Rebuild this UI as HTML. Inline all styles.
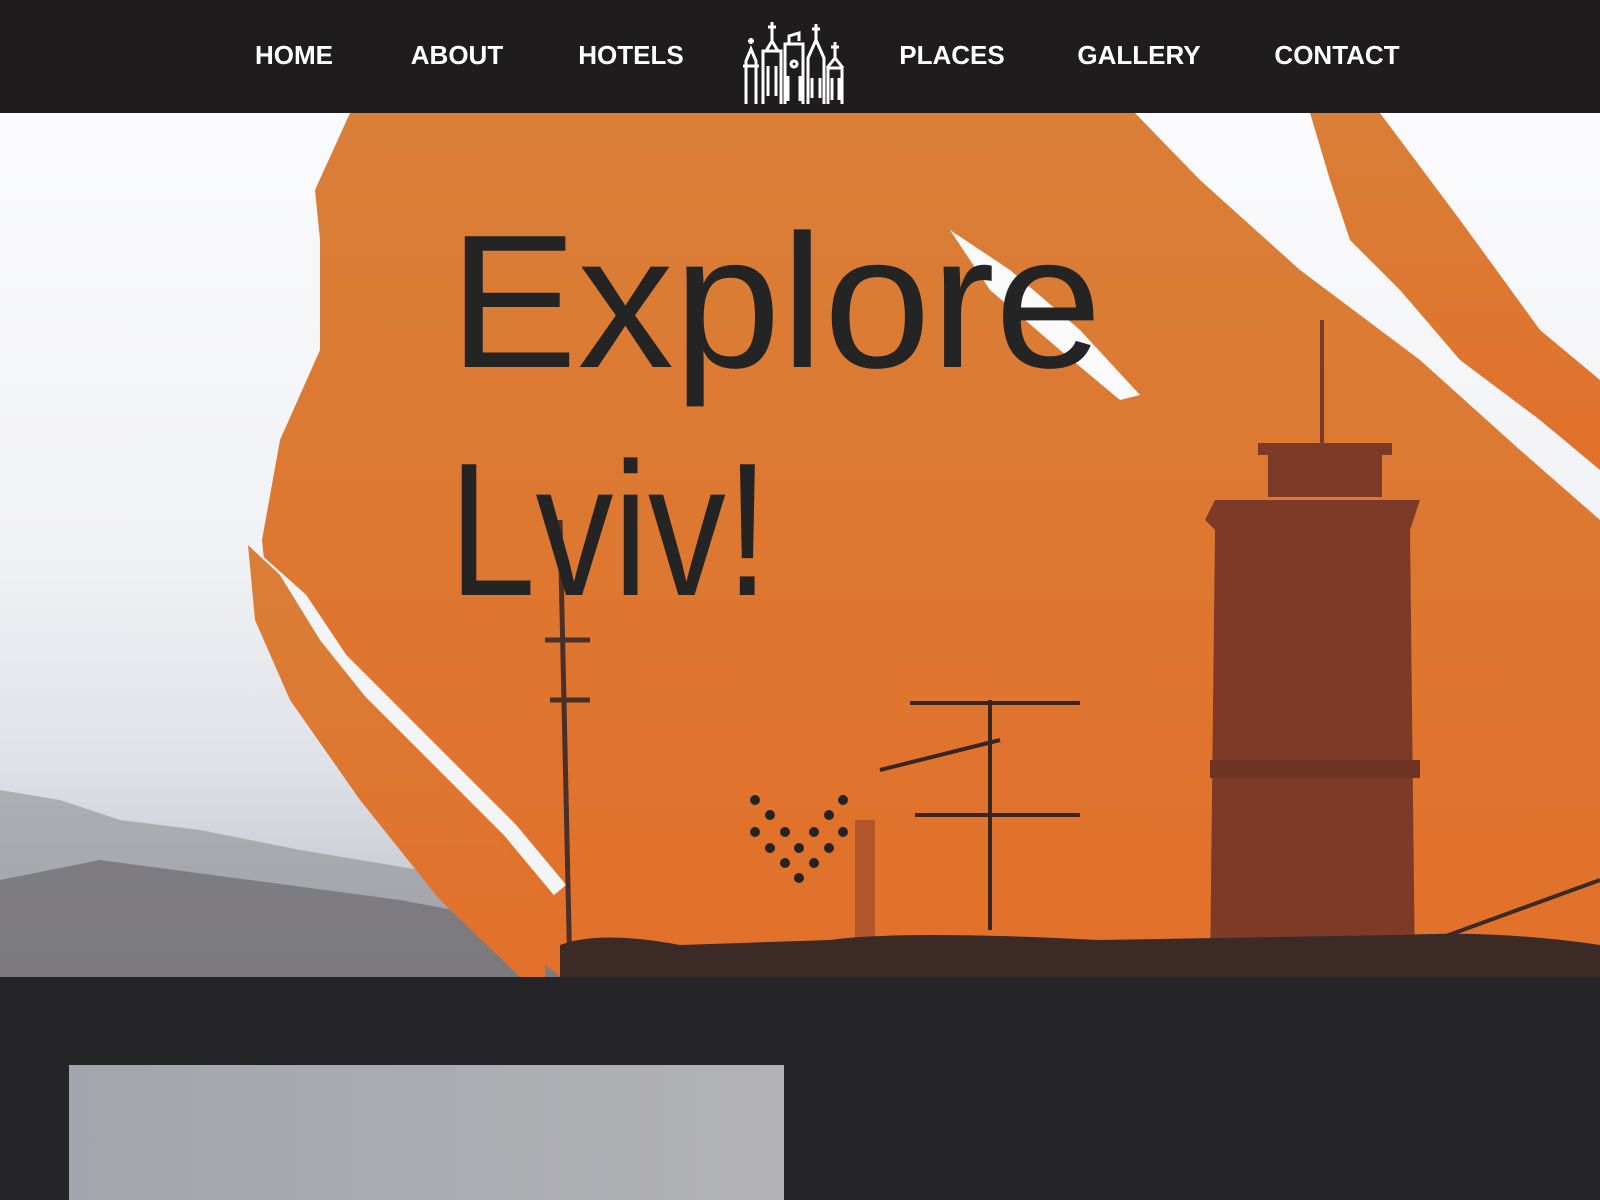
<!DOCTYPE html>
<html><head><meta charset="utf-8"><style>
html,body{margin:0;padding:0;width:1600px;height:1200px;overflow:hidden;background:#252429;font-family:"Liberation Sans",sans-serif}
.nav{position:absolute;left:0;top:0;width:1600px;height:113px;background:#1e1c1c;z-index:3}
.nav a{position:absolute;top:40px;color:#fff;font-weight:bold;font-size:26px;text-decoration:none;transform:translateX(-50%);letter-spacing:0}
.hero{position:absolute;left:0;top:113px;width:1600px;height:864px;overflow:hidden;background:linear-gradient(180deg,#fbfbfd 0%,#f1f2f5 50%,#dfe2e8 75%,#b9bcc3 100%)}
.box{position:absolute;left:69px;top:1065px;width:715px;height:135px;background:linear-gradient(90deg,#a2a5ac,#b3b3b6)}
</style></head><body>
<div class="nav">
<a style="left:294px">HOME</a>
<a style="left:457px">ABOUT</a>
<a style="left:631px">HOTELS</a>
<a style="left:952px">PLACES</a>
<a style="left:1139px">GALLERY</a>
<a style="left:1337px">CONTACT</a>
<svg style="position:absolute;left:738px;top:16px" width="110" height="90" viewBox="0 0 110 90" fill="none" stroke="#fff" stroke-width="3">
<path d="M8 88V45l5-12 5 12v43M5 50h16"/><path d="M13 28v-6M10 25h6"/>
<path d="M25 88V35h18v53M28 35l6-10 6 10M34 25V6M30 11h8M30 50v30M38 50v30"/>
<path d="M47 88V28h18v60M51 28v-8l10-3v8M56 45a3 3 0 1 0 .1 0M50 60v25M62 60v25"/>
<path d="M70 88V42l8-18 8 18v46M78 24V8M74 13h8M74 62v20M82 62v20"/>
<path d="M90 88V52h14v36M89 52l8-10 8 10M97 42V26M93 31h8M94 62v22M101 62v22"/>
</svg>
</div>
<div class="hero">
<svg width="1600" height="864" viewBox="0 113 1600 864" style="position:absolute;left:0;top:0">
<defs><linearGradient id="og" x1="0" y1="0" x2="0" y2="1"><stop offset="0" stop-color="#d97f38"/><stop offset="1" stop-color="#e2702a"/></linearGradient></defs>
<path d="M0 790 L60 800 L120 820 L200 830 L300 850 L420 870 L560 900 L560 977 L0 977Z" fill="#8e8f95" opacity=".6"/>
<path d="M0 880 L100 860 L250 880 L400 900 L560 930 L560 977 L0 977Z" fill="#6c6a6d" opacity=".7"/>
<path d="M350 113 L1135 113 L1200 180 L1300 270 L1420 360 L1520 450 L1600 520 L1600 977 L560 977 L470 900 L420 830 L350 760 L300 700 L270 620 L262 540 L280 440 L320 350 L320 240 L315 190 Z" fill="url(#og)"/>
<path d="M255 560 L300 600 L340 660 L400 720 L470 790 L510 830 L560 890" stroke="#f3f4f6" stroke-width="16" fill="none"/>
<path d="M248 545 L280 575 L320 640 L380 715 L450 790 L500 840 L545 900 L545 977 L520 977 L440 900 L360 800 L290 700 L255 620 Z" fill="url(#og)"/>
<path d="M1310 113 L1380 113 L1460 220 L1540 330 L1600 380 L1600 470 L1540 420 L1460 360 L1400 290 L1350 240 L1330 180 Z" fill="url(#og)"/>
<path d="M950 230 L1010 270 L1080 330 L1140 395 L1120 400 L1060 350 L990 290 Z" fill="#fafafb"/>
<path d="M1215 500 L1420 500 L1410 530 L1415 977 L1210 977 L1215 530 L1205 520Z" fill="#7d3a26"/>
<path d="M1270 450h110v45h-110zM1260 445h130v8h-130zM1322 320v125" fill="#7d3a26" stroke="#7d3a26" stroke-width="4"/>
<path d="M1210 760h210v18h-210z" fill="#6e3323"/>
<path d="M990 700v230M910 703h170M915 815h165M880 770l120-30" stroke="#3a2520" stroke-width="4"/>
<path d="M855 820h20v120h-20z" fill="#b0562a"/>
<path d="M560 520 L570 977 M545 640h45M550 700h40" stroke="#4a3028" stroke-width="5"/>
<path d="M560 945 Q600 930 680 945 L830 940 Q900 930 1100 940 L1400 935 Q1500 930 1600 945 L1600 977 L560 977Z" fill="#3c2a26"/>
<path d="M1380 960 L1600 880" stroke="#3c2a26" stroke-width="4"/>
<text x="449" y="367" font-family="Liberation Sans,sans-serif" font-size="190" fill="#242424" textLength="653" lengthAdjust="spacingAndGlyphs">Explore</text>
<text x="449" y="595" font-family="Liberation Sans,sans-serif" font-size="190" fill="#242424" textLength="320" lengthAdjust="spacingAndGlyphs">Lviv!</text>
<g fill="#242424">
<circle cx="755" cy="800" r="5"/><circle cx="843" cy="800" r="5"/>
<circle cx="770" cy="815" r="5"/><circle cx="829" cy="815" r="5"/>
<circle cx="755" cy="832" r="5"/><circle cx="785" cy="832" r="5"/><circle cx="814" cy="832" r="5"/><circle cx="843" cy="832" r="5"/>
<circle cx="770" cy="848" r="5"/><circle cx="799" cy="848" r="5"/><circle cx="829" cy="848" r="5"/>
<circle cx="785" cy="863" r="5"/><circle cx="814" cy="863" r="5"/>
<circle cx="799" cy="878" r="5"/>
</g>
</svg>
</div>
<div class="box"></div>
</body></html>
